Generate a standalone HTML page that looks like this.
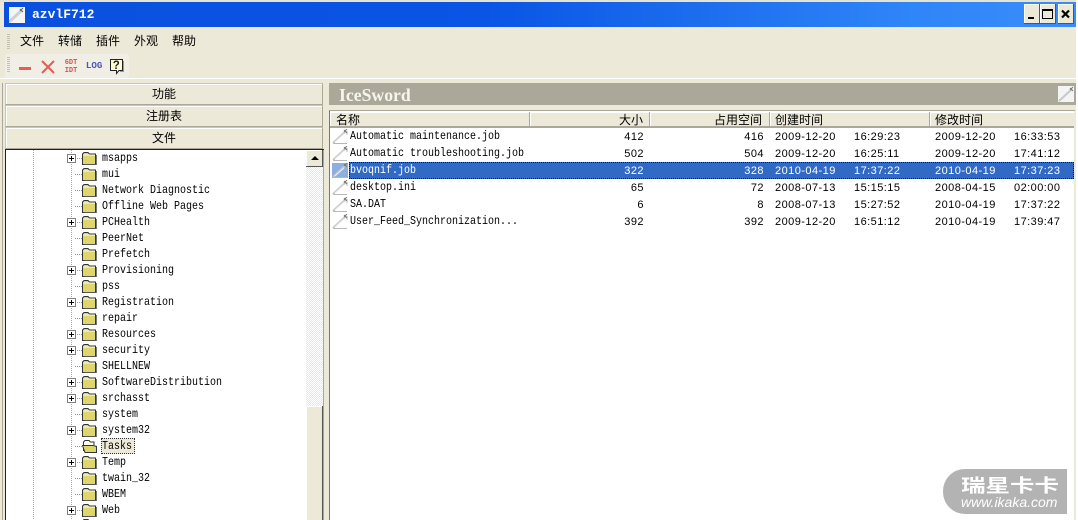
<!DOCTYPE html>
<html><head><meta charset="utf-8"><style>
*{box-sizing:border-box}
html,body{margin:0;padding:0;width:1078px;height:520px;overflow:hidden;background:#ECE9D8}
#m{width:1078px;height:520px;overflow:hidden;position:relative;background:#ECE9D8;font-family:"Liberation Sans","Noto Sans CJK SC",sans-serif;color:#000}
.a{position:absolute}
.z{position:absolute;font:12px/16px "WenQuanYi Zen Hei","Noto Sans CJK SC",sans-serif;white-space:nowrap}
.t{position:absolute;left:102px;margin-top:2px;font:10px/16px "Liberation Mono",monospace;white-space:nowrap;transform:scaleY(1.15);transform-origin:left center}
.f{position:absolute;left:82px;width:15px;height:13px;margin-top:1px}
.p{position:absolute;left:67px;width:9px;height:9px;border:1px solid #808080;background:#fff}
.p:before{content:"";position:absolute;left:1px;top:3px;width:5px;height:1px;background:#000}
.p:after{content:"";position:absolute;left:3px;top:1px;width:1px;height:5px;background:#000}
.d{position:absolute;height:1px;width:7px;left:75px;background-image:linear-gradient(90deg,#999 50%,transparent 50%);background-size:2px 1px}
.b{position:absolute;left:5px;width:318px;height:22px;background:#ECE9D8;border:1px solid;border-color:#C9C6B4 #ACA899 #ACA899 #C9C6B4;box-shadow:inset 1px 1px 0 #fff;text-align:center;font:12px/20px "WenQuanYi Zen Hei","Noto Sans CJK SC",sans-serif}
.h{position:absolute;top:112px;height:16px;background:#ECE9D8;border-right:1px solid #ACA899;border-bottom:2px solid #ACA899;box-shadow:inset 1px 1px 0 #fff;font:12px/15px "WenQuanYi Zen Hei","Noto Sans CJK SC",sans-serif}
.n{position:absolute;left:350px;margin-top:1px;font:10px/17px "Liberation Mono",monospace;white-space:nowrap;transform:scaleY(1.15);transform-origin:left center}
.v{position:absolute;margin-top:1px;font:11px/17px "Liberation Sans",sans-serif;letter-spacing:.45px;white-space:nowrap}
.r{text-align:right}
.i{position:absolute;left:332px;width:16px;height:15px;margin-top:1px}
.w{color:#fff}
</style></head><body><div id="m">
<svg width="0" height="0" style="position:absolute">
<defs>
<symbol id="fo" viewBox="0 0 15 13"><path d="M.5 12.500V2L2 .5h4L7.500 2H13.500v10.500z" fill="#DDD66A" stroke="#333"/><path d="M1.500 3H13" stroke="#fff"/><path d="M14.500 3V13H1.500" fill="none" stroke="#777"/></symbol>
<symbol id="op" viewBox="0 0 15 13"><path d="M1.500 11V2L3 .5h4L8.500 2H12V5" fill="#fff" stroke="#333"/><path d="M.5 5.500H11.500l3 1V12.500H3z" fill="#DDD66A" stroke="#333"/></symbol>
<symbol id="ic" viewBox="0 0 16 15"><path d="M1 14L14 2" stroke="#C8C8C8" stroke-width="2"/><path d="M1 14.500H15" stroke="#B8B8B8"/><path d="M15 2V6" stroke="#B8B8B8"/><path d="M12 1l3 3M15 0l-3 3" stroke="#777"/><path d="M3 13L12 5" stroke="#EEE"/></symbol>
</defs></svg>

<!-- outer and title -->
<div class="a" style="left:0;top:0;width:1078px;height:2px;background:#E6E3D2"></div>
<div class="a" style="left:1076px;top:0;width:2px;height:520px;background:#fff"></div>
<div class="a" style="left:4px;top:2px;width:1072px;height:25px;background:linear-gradient(90deg,#0A50DE 0%,#0A55E5 45%,#2F86F8 85%,#3A8CFB 100%)"></div>
<svg class="a" style="left:9px;top:7px" width="16" height="16" viewBox="0 0 16 16"><rect width="16" height="16" fill="#F4F4F4"/><path d="M0 15L13 3" stroke="#CFCFCF" stroke-width="3"/><path d="M11 2l3 3M14 1l-3 3" stroke="#666"/></svg>
<div class="a" style="left:32px;top:6px;color:#fff;font:bold 13px/18px 'Liberation Mono',monospace">azvlF712</div>
<div class="a" style="left:1024px;top:4px;width:16px;height:20px;background:#ECE9D8;border-right:1px solid #555;border-bottom:1px solid #555;box-shadow:inset 1px 1px 0 #fff"></div>
<div class="a" style="left:1028px;top:17px;width:6px;height:2px;background:#000"></div>
<div class="a" style="left:1040px;top:4px;width:16px;height:20px;background:#ECE9D8;border-right:1px solid #555;border-bottom:1px solid #555;box-shadow:inset 1px 1px 0 #fff"></div>
<div class="a" style="left:1042px;top:9px;width:11px;height:10px;border:1px solid #000;border-top-width:2px"></div>
<div class="a" style="left:1058px;top:4px;width:16px;height:20px;background:#ECE9D8;border-right:1px solid #555;border-bottom:1px solid #555;box-shadow:inset 1px 1px 0 #fff"></div>
<svg class="a" style="left:1061px;top:9px" width="10" height="10" viewBox="0 0 10 10"><path d="M1 1.500L8 8.500M8 1.500L1 8.500" stroke="#000" stroke-width="2.200"/></svg>

<!-- menu -->
<div class="a" style="left:7px;top:34px;width:3px;height:15px;background-image:linear-gradient(#C4C1AE 50%,transparent 50%);background-size:3px 2px"></div>
<div class="z" style="left:20px;top:33px">文件</div>
<div class="z" style="left:58px;top:33px">转储</div>
<div class="z" style="left:96px;top:33px">插件</div>
<div class="z" style="left:134px;top:33px">外观</div>
<div class="z" style="left:172px;top:33px">帮助</div>

<!-- toolbar -->
<div class="a" style="left:5px;top:54px;width:124px;height:24px;background:#F1EFE5;border-radius:3px"></div>
<div class="a" style="left:7px;top:57px;width:3px;height:15px;background-image:linear-gradient(#C4C1AE 50%,transparent 50%);background-size:3px 2px"></div>
<div class="a" style="left:19px;top:67px;width:12px;height:3px;background:#E85B5B"></div>
<svg class="a" style="left:41px;top:60px" width="14" height="14" viewBox="0 0 14 14"><path d="M1 1L13 13M13 1L1 13" stroke="#E65A55" stroke-width="2"/></svg>
<div class="a" style="left:64px;top:60px;width:14px;color:#D9534F;font:bold 7px/7.500px 'Liberation Mono',monospace;text-align:center">6DT<br>IDT</div>
<div class="a" style="left:86px;top:60px;color:#4C55B8;font:bold 9px/12px 'Liberation Mono',monospace;transform:scaleX(1.02)">LOG</div>
<svg class="a" style="left:109px;top:58px" width="16" height="17" viewBox="0 0 16 17"><path d="M1.500 1.500H13.500V12.500H10L7.500 15.500V12.500H1.500z" fill="#FFFBD5" stroke="#222"/><path d="M14.500 3V13.500H11" fill="none" stroke="#999"/><text x="3.800" y="11" font-family="Liberation Sans" font-weight="bold" font-size="11.500" fill="#222">?</text></svg>
<div class="a" style="left:0;top:78px;width:1076px;height:1px;background:#fff"></div>

<!-- left stack -->
<div class="a" style="left:0;top:83px;width:3px;height:437px;background:#ECE9D8;border-right:1px solid #ACA899"></div>
<div class="b" style="top:83px">功能</div>
<div class="b" style="top:105px">注册表</div>
<div class="b" style="top:127px">文件</div>

<!-- tree -->
<div class="a" style="left:5px;top:149px;width:319px;height:371px;background:#fff;border-left:1px solid #222;border-top:1px solid #222"></div>
<div class="a" style="left:33px;top:150px;width:1px;height:370px;background-image:linear-gradient(#AAA 50%,transparent 50%);background-size:1px 2px"></div>
<div class="a" style="left:71px;top:150px;width:1px;height:370px;background-image:linear-gradient(#AAA 50%,transparent 50%);background-size:1px 2px"></div>

<div class="d" style="top:158px"></div><div class="p" style="top:154px"></div><svg class="f" style="top:151px"><use href="#fo"/></svg><div class="t" style="top:150px">msapps</div>
<div class="d" style="top:174px"></div><svg class="f" style="top:167px"><use href="#fo"/></svg><div class="t" style="top:166px">mui</div>
<div class="d" style="top:190px"></div><svg class="f" style="top:183px"><use href="#fo"/></svg><div class="t" style="top:182px">Network Diagnostic</div>
<div class="d" style="top:206px"></div><svg class="f" style="top:199px"><use href="#fo"/></svg><div class="t" style="top:198px">Offline Web Pages</div>
<div class="d" style="top:222px"></div><div class="p" style="top:218px"></div><svg class="f" style="top:215px"><use href="#fo"/></svg><div class="t" style="top:214px">PCHealth</div>
<div class="d" style="top:238px"></div><svg class="f" style="top:231px"><use href="#fo"/></svg><div class="t" style="top:230px">PeerNet</div>
<div class="d" style="top:254px"></div><svg class="f" style="top:247px"><use href="#fo"/></svg><div class="t" style="top:246px">Prefetch</div>
<div class="d" style="top:270px"></div><div class="p" style="top:266px"></div><svg class="f" style="top:263px"><use href="#fo"/></svg><div class="t" style="top:262px">Provisioning</div>
<div class="d" style="top:286px"></div><svg class="f" style="top:279px"><use href="#fo"/></svg><div class="t" style="top:278px">pss</div>
<div class="d" style="top:302px"></div><div class="p" style="top:298px"></div><svg class="f" style="top:295px"><use href="#fo"/></svg><div class="t" style="top:294px">Registration</div>
<div class="d" style="top:318px"></div><svg class="f" style="top:311px"><use href="#fo"/></svg><div class="t" style="top:310px">repair</div>
<div class="d" style="top:334px"></div><div class="p" style="top:330px"></div><svg class="f" style="top:327px"><use href="#fo"/></svg><div class="t" style="top:326px">Resources</div>
<div class="d" style="top:350px"></div><div class="p" style="top:346px"></div><svg class="f" style="top:343px"><use href="#fo"/></svg><div class="t" style="top:342px">security</div>
<div class="d" style="top:366px"></div><svg class="f" style="top:359px"><use href="#fo"/></svg><div class="t" style="top:358px">SHELLNEW</div>
<div class="d" style="top:382px"></div><div class="p" style="top:378px"></div><svg class="f" style="top:375px"><use href="#fo"/></svg><div class="t" style="top:374px">SoftwareDistribution</div>
<div class="d" style="top:398px"></div><div class="p" style="top:394px"></div><svg class="f" style="top:391px"><use href="#fo"/></svg><div class="t" style="top:390px">srchasst</div>
<div class="d" style="top:414px"></div><svg class="f" style="top:407px"><use href="#fo"/></svg><div class="t" style="top:406px">system</div>
<div class="d" style="top:430px"></div><div class="p" style="top:426px"></div><svg class="f" style="top:423px"><use href="#fo"/></svg><div class="t" style="top:422px">system32</div>
<div class="d" style="top:446px"></div><svg class="f" style="top:439px"><use href="#op"/></svg><div class="a" style="left:101px;top:438px;width:34px;height:16px;background:#ECE9D8;border:1px dotted #333"></div><div class="t" style="top:438px">Tasks</div>
<div class="d" style="top:462px"></div><div class="p" style="top:458px"></div><svg class="f" style="top:455px"><use href="#fo"/></svg><div class="t" style="top:454px">Temp</div>
<div class="d" style="top:478px"></div><svg class="f" style="top:471px"><use href="#fo"/></svg><div class="t" style="top:470px">twain_32</div>
<div class="d" style="top:494px"></div><svg class="f" style="top:487px"><use href="#fo"/></svg><div class="t" style="top:486px">WBEM</div>
<div class="d" style="top:510px"></div><div class="p" style="top:506px"></div><svg class="f" style="top:503px"><use href="#fo"/></svg><div class="t" style="top:502px">Web</div>
<svg class="f" style="top:518px"><use href="#fo"/></svg>

<!-- tree scrollbar -->
<div class="a" style="left:306px;top:150px;width:17px;height:370px;background:#F4F3EC;background-image:repeating-conic-gradient(#ECE9D8 0 25%,#fff 0 50%);background-size:2px 2px"></div>
<div class="a" style="left:306px;top:150px;width:17px;height:17px;background:#ECE9D8;border-right:1px solid #555;border-bottom:1px solid #555;box-shadow:inset 1px 1px 0 #fff"></div>
<div class="a" style="left:311px;top:156px;width:0;height:0;border-left:4px solid transparent;border-right:4px solid transparent;border-bottom:4px solid #000"></div>
<div class="a" style="left:306px;top:406px;width:17px;height:114px;background:#ECE9D8;border-right:1px solid #555;box-shadow:inset 1px 1px 0 #fff"></div>
<div class="a" style="left:323px;top:150px;width:1px;height:370px;background:#ACA899"></div>

<!-- right header -->
<div class="a" style="left:329px;top:83px;width:747px;height:22px;background:#ACA899"></div>
<div class="a" style="left:339px;top:85px;color:#F6F5EF;font:bold 17.700px/20px 'Liberation Serif',serif">IceSword</div>
<svg class="a" style="left:1058px;top:86px" width="16" height="16" viewBox="0 0 16 16"><rect width="16" height="16" fill="#F4F4F4"/><path d="M1 15L14 3" stroke="#C8C8C8" stroke-width="2"/><path d="M12 2l3 3M15 1l-3 3" stroke="#777"/></svg>

<!-- list -->
<div class="a" style="left:329px;top:110px;width:746px;height:410px;background:#fff;border-left:1px solid #777;border-top:1px solid #ACA899"></div>
<div class="a" style="left:1074px;top:111px;width:2px;height:409px;background:#ECE9D8"></div>
<div class="h" style="left:330px;width:200px;padding-left:6px">名称</div>
<div class="h" style="left:530px;width:120px;padding-right:6px;text-align:right">大小</div>
<div class="h" style="left:650px;width:120px;padding-right:7px;text-align:right">占用空间</div>
<div class="h" style="left:770px;width:160px;padding-left:5px">创建时间</div>
<div class="h" style="left:930px;width:144px;padding-left:5px;border-right:0">修改时间</div>

<!-- selected -->
<div class="a" style="left:349px;top:162px;width:725px;height:17px;background:#316AC5;outline:1px dotted #111;outline-offset:-1px"></div>
<div class="a" style="left:332px;top:163px;width:16px;height:15px;background:#8CAEE3"></div>

<svg class="i" style="top:128px"><use href="#ic"/></svg>
<svg class="i" style="top:145px"><use href="#ic"/></svg>
<svg class="i" style="top:162px"><use href="#ic"/></svg>
<svg class="i" style="top:179px"><use href="#ic"/></svg>
<svg class="i" style="top:196px"><use href="#ic"/></svg>
<svg class="i" style="top:213px"><use href="#ic"/></svg>

<div class="n" style="top:128px">Automatic maintenance.job</div>
<div class="v r" style="top:128px;left:600px;width:44px">412</div>
<div class="v r" style="top:128px;left:720px;width:44px">416</div>
<div class="v" style="top:128px;left:775px">2009-12-20</div>
<div class="v" style="top:128px;left:854px">16:29:23</div>
<div class="v" style="top:128px;left:935px">2009-12-20</div>
<div class="v" style="top:128px;left:1014px">16:33:53</div>

<div class="n" style="top:145px">Automatic troubleshooting.job</div>
<div class="v r" style="top:145px;left:600px;width:44px">502</div>
<div class="v r" style="top:145px;left:720px;width:44px">504</div>
<div class="v" style="top:145px;left:775px">2009-12-20</div>
<div class="v" style="top:145px;left:854px">16:25:11</div>
<div class="v" style="top:145px;left:935px">2009-12-20</div>
<div class="v" style="top:145px;left:1014px">17:41:12</div>

<div class="n w" style="top:162px">bvoqnif.job</div>
<div class="v r w" style="top:162px;left:600px;width:44px">322</div>
<div class="v r w" style="top:162px;left:720px;width:44px">328</div>
<div class="v w" style="top:162px;left:775px">2010-04-19</div>
<div class="v w" style="top:162px;left:854px">17:37:22</div>
<div class="v w" style="top:162px;left:935px">2010-04-19</div>
<div class="v w" style="top:162px;left:1014px">17:37:23</div>

<div class="n" style="top:179px">desktop.ini</div>
<div class="v r" style="top:179px;left:600px;width:44px">65</div>
<div class="v r" style="top:179px;left:720px;width:44px">72</div>
<div class="v" style="top:179px;left:775px">2008-07-13</div>
<div class="v" style="top:179px;left:854px">15:15:15</div>
<div class="v" style="top:179px;left:935px">2008-04-15</div>
<div class="v" style="top:179px;left:1014px">02:00:00</div>

<div class="n" style="top:196px">SA.DAT</div>
<div class="v r" style="top:196px;left:600px;width:44px">6</div>
<div class="v r" style="top:196px;left:720px;width:44px">8</div>
<div class="v" style="top:196px;left:775px">2008-07-13</div>
<div class="v" style="top:196px;left:854px">15:27:52</div>
<div class="v" style="top:196px;left:935px">2010-04-19</div>
<div class="v" style="top:196px;left:1014px">17:37:22</div>

<div class="n" style="top:213px">User_Feed_Synchronization...</div>
<div class="v r" style="top:213px;left:600px;width:44px">392</div>
<div class="v r" style="top:213px;left:720px;width:44px">392</div>
<div class="v" style="top:213px;left:775px">2009-12-20</div>
<div class="v" style="top:213px;left:854px">16:51:12</div>
<div class="v" style="top:213px;left:935px">2010-04-19</div>
<div class="v" style="top:213px;left:1014px">17:39:47</div>

<!-- watermark -->
<div class="a" style="left:943px;top:469px;width:124px;height:45px;background:#B3B3B3;border-radius:22px 0 0 22px"></div>
<div class="a" style="left:961px;top:475px;color:#fff;font:bold 18px/21px 'WenQuanYi Zen Hei','Noto Sans CJK SC',sans-serif;white-space:nowrap;transform:scaleX(1.36);transform-origin:left center">瑞星卡卡</div>
<div class="a" style="left:961px;top:494px;color:#fff;font:italic 14px/16px 'Liberation Sans',sans-serif;white-space:nowrap">www.ikaka.com</div>
</div></body></html>
